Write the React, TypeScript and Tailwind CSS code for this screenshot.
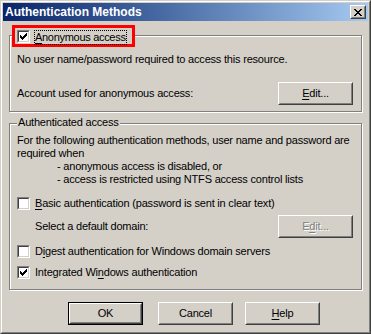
import React from "react";

function CheckMark() {
    // 7x7 classic tick, pixel by pixel
    const px: [number, number][] = [
        [6, 0], [5, 1], [6, 1], [0, 2], [4, 2], [5, 2], [6, 2],
        [0, 3], [1, 3], [3, 3], [4, 3], [5, 3],
        [0, 4], [1, 4], [2, 4], [3, 4], [4, 4],
        [1, 5], [2, 5], [3, 5], [2, 6],
    ];
    return (
        <svg width="7" height="7" viewBox="0 0 7 7" shapeRendering="crispEdges" className="absolute left-[1px] top-[1px]">
            {px.map(([x, y]) => (
                <rect key={`${x}-${y}`} x={x} y={y} width="1" height="1" fill="#000" />
            ))}
        </svg>
    );
}

function Checkbox({ checked }: { checked?: boolean }) {
    return (
        <span className="block w-[13px] h-[13px] shrink-0 border border-t-[#808080] border-l-[#808080] border-r-white border-b-white">
            <span className="relative block w-full h-full bg-white border border-t-[#404040] border-l-[#404040] border-r-[#d4d0c8] border-b-[#d4d0c8]">
                {checked && <CheckMark />}
            </span>
        </span>
    );
}

function Button({
    children,
    isDefault,
    disabled,
}: {
    children: React.ReactNode;
    isDefault?: boolean;
    disabled?: boolean;
}) {
    const face = (
        <span className="flex h-full w-full border border-t-white border-l-white border-r-[#404040] border-b-[#404040]">
            <span
                className={
                    "flex h-full w-full items-center justify-center border border-t-[#d4d0c8] border-l-[#d4d0c8] border-r-[#808080] border-b-[#808080] " +
                    (disabled ? "text-[#808080] [text-shadow:1px_1px_0_#fff]" : "text-black")
                }
            >
                {children}
            </span>
        </span>
    );
    if (isDefault) {
        return <span className="block w-[75px] h-[23px] shrink-0 border border-black">{face}</span>;
    }
    return <span className="block w-[75px] h-[23px] shrink-0">{face}</span>;
}

const U = ({ children }: { children: React.ReactNode }) => (
    <span className="underline underline-offset-[2px] decoration-1">{children}</span>
);

function CloseGlyph() {
    const rows = ["xx....xx", ".xx..xx.", "..xxxx..", "...xx...", "..xxxx..", ".xx..xx.", "xx....xx"];
    return (
        <svg width="8" height="7" viewBox="0 0 8 7" shapeRendering="crispEdges">
            {rows.flatMap((r, y) =>
                r.split("").map((c, x) =>
                    c === "x" ? <rect key={`${x}-${y}`} x={x} y={y} width="1" height="1" fill="#000" /> : null
                )
            )}
        </svg>
    );
}

export default function App() {
    return (
        <div className="w-[371px] h-[334px] overflow-hidden bg-[#d4d0c8] border border-t-[#d4d0c8] border-l-[#d4d0c8] border-r-[#404040] border-b-[#404040] font-['Liberation_Sans',Arial,sans-serif] text-[11px] leading-[13px] tracking-[-0.2px] whitespace-nowrap text-black">
            <div className="flex h-full flex-col border border-t-white border-l-white border-r-[#808080] border-b-[#808080] p-px">
                {/* caption */}
                <div className="flex h-[18px] shrink-0 items-center justify-between bg-gradient-to-r from-[#0a246a] to-[#a6caf0] pl-[2px] pr-[2px]">
                    <span className="text-[12px] font-bold text-white leading-[14px] tracking-normal">Authentication Methods</span>
                    <span className="block w-[16px] h-[14px] border border-t-white border-l-white border-r-[#404040] border-b-[#404040] bg-[#d4d0c8]">
                        <span className="flex h-full w-full items-center justify-center border border-t-[#d4d0c8] border-l-[#d4d0c8] border-r-[#808080] border-b-[#808080]">
                            <CloseGlyph />
                        </span>
                    </span>
                </div>

                <div className="flex flex-1 flex-col px-[6px] pt-[14px]">
                    {/* anonymous group */}
                    <div className="relative w-[353px] border border-[#808080] shadow-[inset_1px_1px_0_#fff,1px_1px_0_#fff] pl-[7px] pr-[8px] pt-[17px] pb-[6px]">
                        <div className="absolute left-[2px] top-[-11px] flex h-[22px] w-[123px] items-start border-[3px] border-[#ff0000] bg-[#d4d0c8] pl-[2px] pt-[2px]">
                            <Checkbox checked />
                            <span className="ml-[4px] border border-dotted border-black leading-[13px] tracking-[-0.3px]">
                                <U>A</U>nonymous access
                            </span>
                        </div>
                        <div>No user name/password required to access this resource.</div>
                        <div className="mt-[16px] flex items-center justify-between">
                            <span>Account used for anonymous access:</span>
                            <Button>
                                <U>E</U>dit...
                            </Button>
                        </div>
                    </div>

                    {/* authenticated group */}
                    <div className="relative mt-[11px] w-[353px] border border-[#808080] shadow-[inset_1px_1px_0_#fff,1px_1px_0_#fff] pl-[7px] pr-[8px] pt-[10px] pb-[10px]">
                        <span className="absolute left-[7px] top-[-8px] bg-[#d4d0c8] px-px">Authenticated access</span>
                        <div>For the following authentication methods, user name and password are</div>
                        <div>required when</div>
                        <div className="pl-[40px]">- anonymous access is disabled, or</div>
                        <div className="pl-[40px]">- access is restricted using NTFS access control lists</div>

                        <div className="mt-[11px] flex h-[13px] items-center">
                            <Checkbox />
                            <span className="ml-[5px]">
                                <U>B</U>asic authentication (password is sent in clear text)
                            </span>
                        </div>
                        <div className="mt-[5px] flex items-center justify-between">
                            <span className="ml-[18px]">Select a default domain:</span>
                            <Button disabled>
                                E<U>d</U>it...
                            </Button>
                        </div>
                        <div className="mt-[7px] flex h-[13px] items-center">
                            <Checkbox />
                            <span className="ml-[5px]">
                                D<U>i</U>gest authentication for Windows domain servers
                            </span>
                        </div>
                        <div className="mt-[8px] flex h-[13px] items-center">
                            <Checkbox checked />
                            <span className="ml-[5px]">
                                Integrated Wi<U>n</U>dows authentication
                            </span>
                        </div>
                    </div>

                    {/* dialog buttons */}
                    <div className="mt-[12px] flex pl-[59px]">
                        <Button isDefault>OK</Button>
                        <span className="ml-[15px]">
                            <Button>Cancel</Button>
                        </span>
                        <span className="ml-[12px]">
                            <Button>
                                <U>H</U>elp
                            </Button>
                        </span>
                    </div>
                </div>
            </div>
        </div>
    );
}
